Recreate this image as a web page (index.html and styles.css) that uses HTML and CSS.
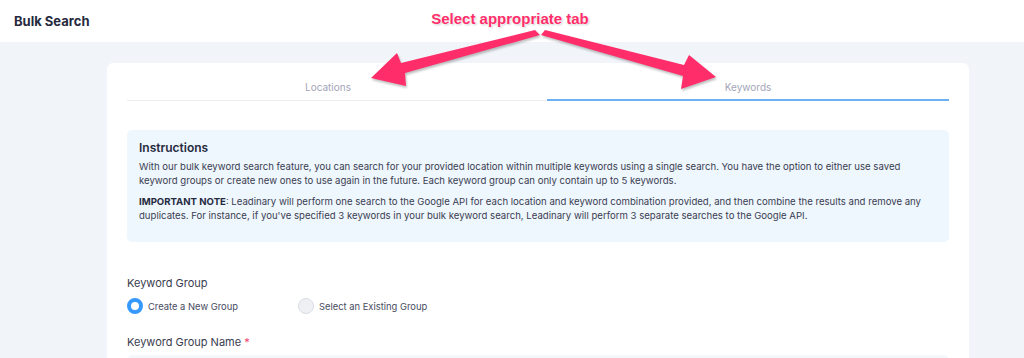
FILE: index.html
```html
<!DOCTYPE html>
<html lang="en">
<head>
    <meta charset="UTF-8">
    <meta name="viewport" content="width=device-width, initial-scale=1.0">
    <title>Bulk Search</title>
    <link rel="stylesheet" href="styles.css">
</head>
<body>

    <div class="header">
        <h1>Bulk Search</h1>
    </div>

    <div class="page">
        <div class="card">
            <!-- Tabs -->
            <div class="tabs">
                <div class="tab first">Locations</div>
                <div class="tab active">Keywords</div>
            </div>

            <!-- Instructions -->
            <div class="notice">
                <h3>Instructions</h3>
                <p>With our bulk keyword search feature, you can search for your provided location within multiple keywords using a single search. You have the option to either use saved keyword groups or create new ones to use again in the future. Each keyword group can only contain up to 5 keywords.</p>
                <p><strong>IMPORTANT NOTE</strong>: Leadinary will perform one search to the Google API for each location and keyword combination provided, and then combine the results and remove any duplicates. For instance, if you've specified 3 keywords in your bulk keyword search, Leadinary will perform 3 separate searches to the Google API.</p>
            </div>

            <!-- Keyword group -->
            <div class="form-group">
                <label class="label">Keyword Group</label>
                <div class="radios">
                    <label class="radio"><span class="dot checked"></span>Create a New Group</label>
                    <label class="radio"><span class="dot"></span>Select an Existing Group</label>
                </div>
            </div>

            <div class="form-group name-group">
                <label class="label">Keyword Group Name <span class="req">*</span></label>
                <div class="input"></div>
            </div>
        </div>
    </div>

    <!-- Annotation overlay -->
    <div class="note-text">Select appropriate tab</div>
    <svg class="arrows" width="1024" height="100" viewBox="0 0 1024 100">
        <polygon points="535,30 540,35 405,73 406,86 371,78 397,53 401,63" fill="#ff2d6a"/>
        <polygon points="545,30 684,65 689,55 716,77 681,89 683,76 541,35" fill="#ff2d6a"/>
    </svg>

</body>
</html>
```

FILE: styles.css
```css
body {
    font-family: Inter, "Open Sans", sans-serif;
    background-color: #f1f4f8;
    margin: 0;
    padding: 0;
    color: #3a3d50;
}

.header {
    background-color: #fff;
    height: 42px;
    display: flex;
    align-items: center;
    padding-left: 14px;
}

.header h1 {
    margin: 0;
    font-size: 13px;
    font-weight: 700;
    color: #262a3e;
}

.page {
    padding: 21px 55px 0 107px;
}

.card {
    background-color: #fff;
    border-radius: 6px;
    padding: 11px 20px 0 20px;
    height: 300px;
}

.tabs {
    display: flex;
}

.tab {
    flex: 1;
    text-align: center;
    font-size: 10px;
    color: #a3a6b8;
    height: 26px;
    line-height: 26px;
    border-bottom: 1px solid #eceef2;
}

.tab.first {
    flex: 0 0 402px;
    padding-right: 18px;
}

.tab.active {
    border-bottom: 2px solid #6cb2f2;
    height: 25px;
}

.notice {
    background-color: #eef6fe;
    border-radius: 5px;
    margin-top: 29px;
    padding: 10px 12px 12px 12px;
}

.notice h3 {
    margin: 0 0 5px;
    font-size: 12px;
    line-height: 15px;
    font-weight: 600;
    color: #262a3e;
}

.notice p {
    margin: 0 0 7px;
    font-size: 9.6px;
    line-height: 14px;
}

.notice strong {
    font-weight: 700;
    color: #262a3e;
}

.form-group {
    margin-top: 34px;
}

.form-group.name-group {
    margin-top: 19px;
}

.label {
    display: block;
    font-size: 11px;
    line-height: 15px;
    color: #3a3d50;
}

.req {
    color: #f1416c;
}

.radios {
    display: flex;
    margin-top: 5px;
}

.radio {
    display: flex;
    align-items: center;
    font-size: 9.4px;
    color: #474b60;
    width: 171px;
    height: 20px;
}

.dot {
    box-sizing: border-box;
    width: 16px;
    height: 16px;
    border-radius: 50%;
    background-color: #eef0f4;
    border: 1px solid #d9dce4;
    margin-right: 5px;
}

.dot.checked {
    background-color: #fff;
    border: 4px solid #3699ff;
}

.input {
    margin-top: 5px;
    height: 36px;
    background-color: #f5f8fa;
    border-radius: 5px;
}

.note-text {
    position: absolute;
    top: 10px;
    left: 0;
    width: 1020px;
    text-align: center;
    font-family: "Liberation Sans", Arial, sans-serif;
    font-weight: bold;
    font-size: 15px;
    color: #ff2d6a;
    text-shadow: 0 0 2px #fff, 0 0 2px #fff, 1px 1px 2px rgba(0, 0, 0, 0.25);
}

.arrows {
    position: absolute;
    top: 0;
    left: 0;
    filter: drop-shadow(1px 2px 1px rgba(0, 0, 0, 0.25));
}
```
